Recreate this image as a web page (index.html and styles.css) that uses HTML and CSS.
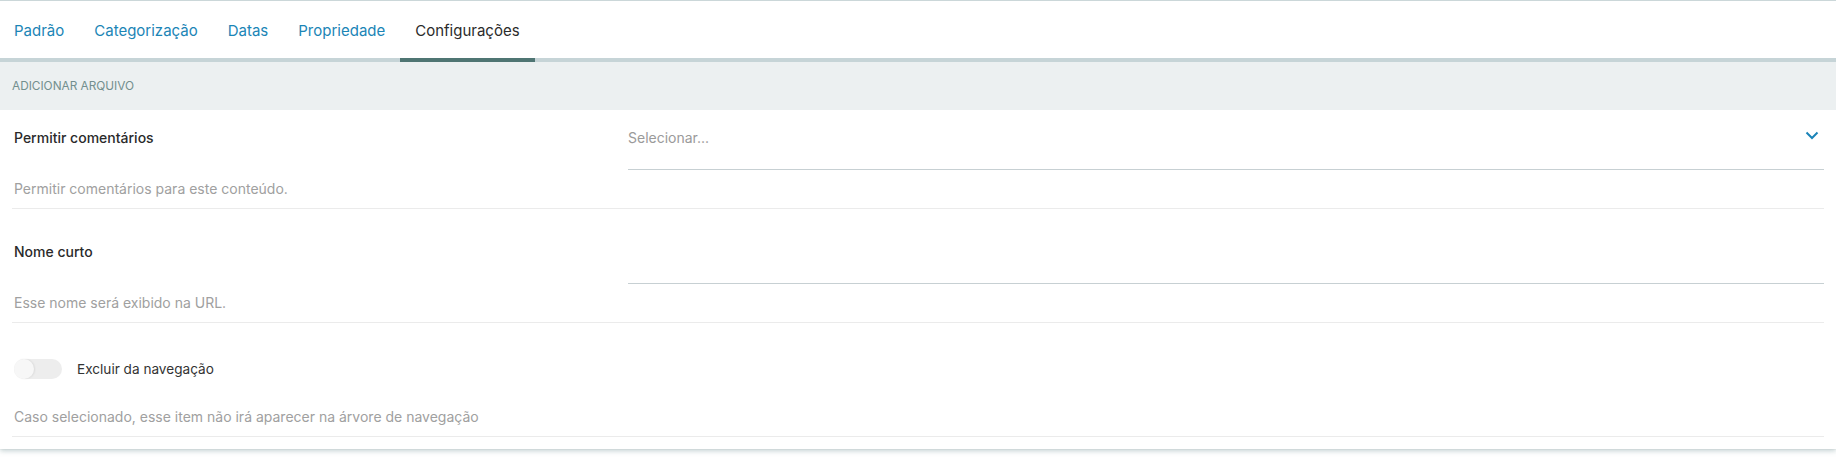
FILE: index.html
```html
<!DOCTYPE html>
<html lang="pt">
<head>
<meta charset="utf-8">
<title>Configurações</title>
<link rel="stylesheet" href="styles.css">
</head>
<body>
<div class="card">
  <nav class="tabs">
    <a class="tab">Padrão</a>
    <a class="tab">Categorização</a>
    <a class="tab">Datas</a>
    <a class="tab">Propriedade</a>
    <a class="tab active">Configurações</a>
  </nav>
  <div class="section-header">Adicionar arquivo</div>
  <div class="rows">
    <div class="row">
      <div class="label">Permitir comentários</div>
      <div class="field select">
        <span class="placeholder">Selecionar...</span>
        <svg class="chevron" width="14" height="9" viewBox="0 0 14 9"><path d="M1.5 1.5 L7 7 L12.5 1.5" fill="none" stroke="#1b84b8" stroke-width="2"/></svg>
      </div>
      <div class="hint">Permitir comentários para este conteúdo.</div>
    </div>
    <div class="row">
      <div class="label">Nome curto</div>
      <div class="field input"></div>
      <div class="hint">Esse nome será exibido na URL.</div>
    </div>
    <div class="row toggle-row">
      <div class="toggle-line">
        <span class="toggle"><span class="knob"></span></span>
        <span class="toggle-label">Excluir da navegação</span>
      </div>
      <div class="hint">Caso selecionado, esse item não irá aparecer na árvore de navegação</div>
    </div>
  </div>
</div>
</body>
</html>
```

FILE: styles.css
```css
html, body {
  margin: 0;
  padding: 0;
  background: #ffffff;
}
body {
  font-family: Inter, "Noto Sans", sans-serif;
  width: 1836px;
  height: 468px;
  overflow: hidden;
}
.card {
  background: #fff;
  border-top: 1px solid #cbd7d9;
  box-shadow: 0 2px 5px rgba(90, 125, 128, 0.35), 0 0 1px rgba(0, 0, 0, 0.18);
  padding-bottom: 12px;
}
.tabs {
  display: flex;
  height: 57px;
  border-bottom: 4px solid #c6d4d7;
  padding-left: 0;
}
.tab {
  display: flex;
  align-items: center;
  padding: 1px 15px 0 15px;
  font-size: 15px;
  color: #1b85b6;
  margin-bottom: -4px;
  border-bottom: 4px solid transparent;
  cursor: pointer;
}
.tab:first-child {
  padding-left: 14px;
}
.tab.active {
  color: #2b2b2b;
  border-bottom-color: #4f7573;
}
.section-header {
  height: 48px;
  background: #ecf0f1;
  display: flex;
  align-items: center;
  padding-left: 12px;
  font-size: 11.8px;
  text-transform: uppercase;
  color: #738f8e;
}
.rows {
  padding: 0 12px 0 12px;
}
.row {
  display: grid;
  grid-template-columns: 614px 1fr;
  padding: 18px 0 10px 2px;
  border-bottom: 1px solid #ebebeb;
}
.row + .row {
  margin-top: 15px;
}
.label {
  font-size: 14px;
  line-height: 20px;
  font-weight: 500;
  color: #2a2a2a;
}
.field {
  line-height: 20px;
  padding-bottom: 21px;
  border-bottom: 1px solid #c7d0d3;
  height: 20px;
}
.select {
  display: flex;
  justify-content: space-between;
  align-items: flex-start;
}
.placeholder {
  font-size: 14px;
  color: #9a9a9a;
}
.chevron {
  margin-top: 3px;
  margin-right: 5px;
}
.hint {
  grid-column: 1 / 2;
  margin-top: 10px;
  font-size: 14px;
  line-height: 18px;
  color: #a0a0a0;
  white-space: nowrap;
}
.toggle-row {
  display: block;
  padding-top: 20px;
}
.toggle-row .hint {
  margin-top: 28px;
}
.toggle-line {
  display: flex;
  align-items: center;
  height: 22px;
}
.toggle {
  position: relative;
  width: 48px;
  height: 20px;
  border-radius: 10px;
  background: #ededed;
  margin-right: 15px;
}
.knob {
  position: absolute;
  left: 0;
  top: 0;
  width: 20px;
  height: 20px;
  border-radius: 50%;
  background: #f7f7f7;
  box-shadow: 1px 0 2px rgba(0, 0, 0, 0.08);
}
.toggle-label {
  font-size: 13.6px;
  color: #333;
}
```
